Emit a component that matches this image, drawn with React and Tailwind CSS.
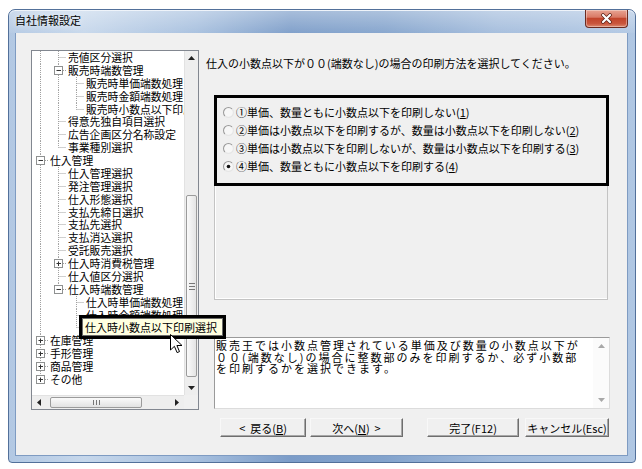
import React from 'react';

const ROWS = [
  { t: '売値区分選択', l: 2, c: [1] },
  { t: '販売時端数管理', l: 2, c: [1], e: '-' },
  { t: '販売時単価端数処理', l: 3, c: [1, 2] },
  { t: '販売時金額端数処理', l: 3, c: [1, 2] },
  { t: '販売時小数点以下印刷選択', l: 3, c: [1, 2], last: true },
  { t: '得意先独自項目選択', l: 2, c: [1] },
  { t: '広告企画区分名称設定', l: 2, c: [1] },
  { t: '事業種別選択', l: 2, c: [1], last: true },
  { t: '仕入管理', l: 1, c: [], e: '-' },
  { t: '仕入管理選択', l: 2, c: [1] },
  { t: '発注管理選択', l: 2, c: [1] },
  { t: '仕入形態選択', l: 2, c: [1] },
  { t: '支払先締日選択', l: 2, c: [1] },
  { t: '支払先選択', l: 2, c: [1] },
  { t: '支払消込選択', l: 2, c: [1] },
  { t: '受託販売選択', l: 2, c: [1] },
  { t: '仕入時消費税管理', l: 2, c: [1], e: '+' },
  { t: '仕入値区分選択', l: 2, c: [1] },
  { t: '仕入時端数管理', l: 2, c: [1], e: '-', last: true },
  { t: '仕入時単価端数処理', l: 3, c: [1] },
  { t: '仕入時金額端数処理', l: 3, c: [1] },
  { t: '仕入時小数点以下印刷選択', l: 3, c: [1], last: true },
  { t: '在庫管理', l: 1, c: [], e: '+' },
  { t: '手形管理', l: 1, c: [], e: '+' },
  { t: '商品管理', l: 1, c: [], e: '+' },
  { t: 'その他', l: 1, c: [], e: '+', last: true },
];

const H = 12.88;
const XL = (l) => 8 + (l - 1) * 18;

function Gutter({ r }) {
  const w = XL(r.l) + 10;
  const m = 6.5;
  const x = XL(r.l) + 0.5;
  const dot = { stroke: '#a0a0a0', strokeWidth: 1, strokeDasharray: '1 1' };
  return (
    <svg width={w} height={H} viewBox={`0 0 ${w} ${H}`} className="shrink-0">
      {r.c.map((a) => (
        <line key={a} x1={XL(a) + 0.5} y1={0} x2={XL(a) + 0.5} y2={H} {...dot} />
      ))}
      {r.e ? (
        <>
          <line x1={x} y1={0} x2={x} y2={2} {...dot} />
          {!r.last && <line x1={x} y1={11} x2={x} y2={H} {...dot} />}
          <line x1={x + 4.5} y1={m} x2={x + 8} y2={m} {...dot} />
          <rect x={x - 4} y={2.5} width={8} height={8} fill="#fff" stroke="#8f9191" strokeWidth={1} />
          <line x1={x - 2} y1={m} x2={x + 2.5} y2={m} stroke="#333" strokeWidth={1} />
          {r.e === '+' && <line x1={x} y1={4.5} x2={x} y2={9} stroke="#333" strokeWidth={1} />}
        </>
      ) : (
        <>
          <line x1={x} y1={0} x2={x} y2={r.last ? m : H} {...dot} />
          <line x1={x} y1={m} x2={x + 8} y2={m} {...dot} />
        </>
      )}
    </svg>
  );
}

function Arrow({ dir, color = '#222' }) {
  const pts = {
    up: '0,4 3.5,0 7,4',
    down: '0,0 3.5,4 7,0',
    left: '4,0 0,3.5 4,7',
    right: '0,0 4,3.5 0,7',
  }[dir];
  const vert = dir === 'up' || dir === 'down';
  return (
    <svg width={vert ? 7 : 4} height={vert ? 4 : 7} viewBox={`0 0 ${vert ? 7 : 4} ${vert ? 4 : 7}`}>
      <polygon points={pts} fill={color} />
    </svg>
  );
}

function Radio({ checked }) {
  return (
    <svg width="11" height="11" viewBox="0 0 11 11" className="shrink-0">
      <path d="M9 2 A4.8 4.8 0 0 0 2 9" fill="none" stroke="#9a9a9a" strokeWidth="1.1" />
      <path d="M2 9 A4.8 4.8 0 0 0 9 2" fill="none" stroke="#e6e6e6" strokeWidth="1.1" />
      <circle cx="5.5" cy="5.5" r="4" fill="#f7f7f7" />
      {checked && <circle cx="5.5" cy="5.5" r="1.8" fill="#111" />}
    </svg>
  );
}

const OPTIONS = [
  ['①単価、数量ともに小数点以下を印刷しない(', '1', ')'],
  ['②単価は小数点以下を印刷するが、数量は小数点以下を印刷しない(', '2', ')'],
  ['③単価は小数点以下を印刷しないが、数量は小数点以下を印刷する(', '3', ')'],
  ['④単価、数量ともに小数点以下を印刷する(', '4', ')'],
];

function Btn({ w, children }) {
  return (
    <div
      className={`${w} h-[19px] flex items-center justify-center text-[11px] leading-[14px] bg-[#f0f0f0] border border-t-[#f8f8f8] border-l-[#f8f8f8] border-r-[#6e6e6e] border-b-[#6e6e6e] shadow-[inset_-1px_-1px_0_#a8a8a8]`}
    >
      {children}
    </div>
  );
}

export default function App() {
  return (
    <div className="w-[642px] h-[469px] bg-white overflow-hidden font-['Noto_Sans_CJK_JP','Noto_Sans',sans-serif] text-black">
      <div className="ml-[8px] mt-[9px] w-[628px] h-[454px] flex flex-col rounded-t-[7px] rounded-b-[4px] border border-[#52709a] bg-[linear-gradient(to_right,#b2c8e3_0%,#c6d7eb_12%,#a6bfde_30%,#7b9cc8_45%,#83a3cc_60%,#a3bcdc_78%,#b0c7e3_100%)] shadow-[inset_0_1px_0_#e6eef8]">
        {/* title bar */}
        <div className="h-[23px] flex items-start justify-between pl-[6px] pr-[7px] bg-[linear-gradient(to_bottom,rgba(255,255,255,0.35),rgba(255,255,255,0.05))] rounded-t-[6px]">
          <span className="mt-[3px] text-[11px] leading-[15px] text-black [text-shadow:0_0_6px_#fff]">自社情報設定</span>
          <div className="w-[43px] h-[18px] flex items-center justify-center rounded-b-[4px] border border-t-0 border-[#6b2b20] bg-[linear-gradient(to_bottom,#e8a493_0%,#d97a66_42%,#c2452c_50%,#c9563d_80%,#dc8a70_100%)] shadow-[inset_0_0_0_1px_rgba(255,255,255,0.35)]">
            <svg width="13" height="11" viewBox="0 0 13 11">
              <path d="M3 2 L10 9 M10 2 L3 9" stroke="#5a1f16" strokeWidth="3.6" strokeLinecap="round" />
              <path d="M3 2 L10 9 M10 2 L3 9" stroke="#ffffff" strokeWidth="2.2" strokeLinecap="round" />
            </svg>
          </div>
        </div>

        {/* client area */}
        <div className="ml-[6px] w-[613px] h-[423px] relative flex bg-[#f0f0f0] border-x border-b border-[#7e9bc2]">
          {/* tree */}
          <div className="ml-[15px] mt-[17px] w-[168px] h-[360px] flex flex-col border border-[#828790] bg-white shrink-0">
            <div className="flex h-[344px]">
              <div className="w-[152px] overflow-hidden">
                {ROWS.map((r, i) => (
                  <div key={i} className="flex items-center h-[12.88px] whitespace-nowrap">
                    <Gutter r={r} />
                    <span className="text-[10.8px] leading-[12.88px]">{r.t}</span>
                  </div>
                ))}
              </div>
              {/* vertical scrollbar */}
              <div className="w-[14px] flex flex-col bg-[#eeeeee] border-l border-[#e2e2e2]">
                <div className="h-[14px] flex items-center justify-center"><Arrow dir="up" /></div>
                <div className="flex-1 flex flex-col">
                  <div className="mt-[130px] h-[182px] mx-[1px] rounded-[2px] border border-[#9b9b9b] bg-[linear-gradient(to_right,#fafafa,#e4e4e4)] flex flex-col items-center justify-center gap-[2px]">
                    <div className="w-[6px] h-[1px] bg-[#777]" />
                    <div className="w-[6px] h-[1px] bg-[#777]" />
                    <div className="w-[6px] h-[1px] bg-[#777]" />
                  </div>
                </div>
                <div className="h-[14px] flex items-center justify-center"><Arrow dir="down" /></div>
              </div>
            </div>
            <div className="flex h-[14px]">
              {/* horizontal scrollbar */}
              <div className="w-[152px] flex bg-[#eeeeee] border-t border-[#e2e2e2]">
                <div className="w-[14px] flex items-center justify-center"><Arrow dir="left" /></div>
                <div className="flex-1 flex items-stretch">
                  <div className="ml-[4px] w-[92px] my-[1px] rounded-[2px] border border-[#9b9b9b] bg-[linear-gradient(to_bottom,#fafafa,#e2e2e2)] flex items-center justify-center gap-[2px]">
                    <div className="w-[1px] h-[5px] bg-[#777]" />
                    <div className="w-[1px] h-[5px] bg-[#777]" />
                    <div className="w-[1px] h-[5px] bg-[#777]" />
                  </div>
                </div>
                <div className="w-[14px] flex items-center justify-center"><Arrow dir="right" /></div>
              </div>
              <div className="w-[14px] bg-[#f0f0f0]" />
            </div>
          </div>

          {/* right column */}
          <div className="ml-[7px] flex flex-col">
            <div className="mt-[23px] text-[11px] leading-[14px] whitespace-nowrap">
              仕入の小数点以下が００(端数なし)の場合の印刷方法を選択してください。
            </div>

            <div className="mt-[25px] ml-[8px] w-[395px] h-[205px] flex flex-col">
              <div className="h-[91px] border-[3px] border-black pl-[6px] pt-[5px] flex flex-col">
                {OPTIONS.map((o, i) => (
                  <div key={i} className="h-[18px] flex items-center gap-[2px] whitespace-nowrap">
                    <Radio checked={i === 3} />
                    <span className="text-[11px] leading-[14px]">
                      {o[0]}
                      <span className="underline underline-offset-[1px]">{o[1]}</span>
                      {o[2]}
                    </span>
                  </div>
                ))}
              </div>
              <div className="flex-1 mr-[1px] border-x border-b border-[#c3c3c3] shadow-[inset_1px_0_0_#ffffff,inset_0_-1px_0_#ffffff]" />
            </div>

            <div className="mt-[37px] ml-[8px] w-[396px] h-[72px] flex bg-white border border-t-[#9a9a9a] border-l-[#9a9a9a] border-r-[#dcdcdc] border-b-[#dcdcdc]">
              <div className="flex-1 pl-[1px] pt-[2px] text-[11px] tracking-[2px] leading-[11.5px] whitespace-nowrap overflow-hidden">
                販売王では小数点管理されている単価及び数量の小数点以下が<br />
                ００(端数なし)の場合に整数部のみを印刷するか、必ず小数部<br />
                を印刷するかを選択できます。
              </div>
              <div className="w-[16px] flex flex-col justify-between items-center py-[6px] bg-[#fbfbfb]">
                <Arrow dir="up" color="#a8a8a8" />
                <Arrow dir="down" color="#a8a8a8" />
              </div>
            </div>

            <div className="mt-[9px] ml-[14px] flex">
              <Btn w="w-[86px]">&lt;&nbsp;&nbsp;戻る(<span className="underline">B</span>)</Btn>
              <div className="w-[4px]" />
              <Btn w="w-[93px]">次へ(<span className="underline">N</span>)&nbsp;&nbsp;&gt;</Btn>
              <div className="w-[24px]" />
              <Btn w="w-[92px]">完了(F12)</Btn>
              <div className="w-[6px]" />
              <Btn w="w-[84px]">キャンセル(Esc)</Btn>
            </div>
          </div>

          {/* tooltip annotation */}
          <div className="absolute left-[63px] top-[282px] w-[147px] h-[24px] border-[3px] border-black">
            <div className="w-full h-full bg-[#ffffe1] border border-[#6b6b6b] pl-[2px] text-[11px] leading-[16px] whitespace-nowrap overflow-hidden">
              仕入時小数点以下印刷選択
            </div>
          </div>

          {/* mouse cursor */}
          <svg className="absolute left-[154px] top-[301px]" width="13" height="20" viewBox="0 0 13 20">
            <path d="M0.5 0.5 L0.5 16 L4.4 12.3 L7.1 18.6 L9.5 17.6 L6.9 11.5 L12 11.5 Z" fill="#fff" stroke="#000" strokeWidth="1" strokeLinejoin="round" />
          </svg>
        </div>
      </div>
    </div>
  );
}
